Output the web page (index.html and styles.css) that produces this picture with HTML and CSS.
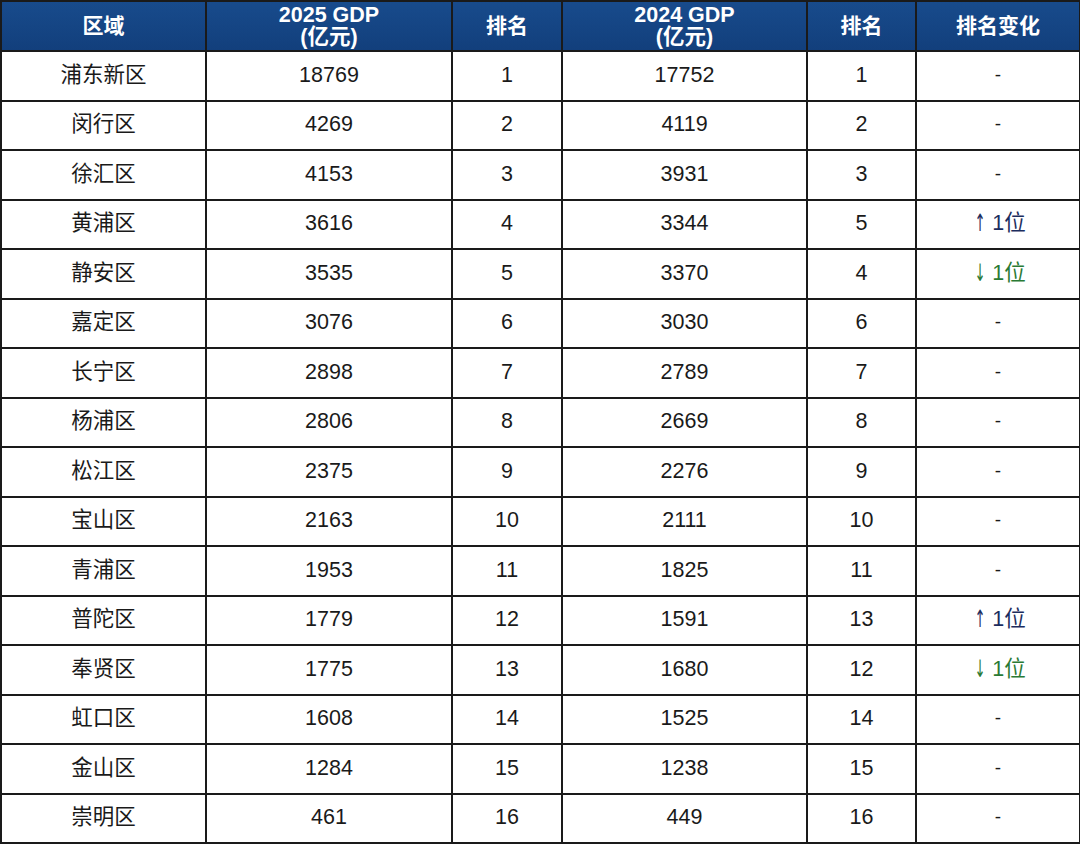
FILE: index.html
```html
<!DOCTYPE html>
<html lang="zh-CN">
<head>
<meta charset="utf-8">
<title>上海各区GDP</title>
<link rel="stylesheet" href="styles.css">
</head>
<body>
<table class="gdp">
  <colgroup>
    <col class="c1"><col class="c2"><col class="c3"><col class="c4"><col class="c5"><col class="c6">
  </colgroup>
  <thead>
    <tr><th>区域</th><th class="two">2025 GDP<br>(亿元)</th><th>排名</th><th class="two">2024 GDP<br>(亿元)</th><th>排名</th><th>排名变化</th></tr>
  </thead>
  <tbody>
    <tr><td>浦东新区</td><td>18769</td><td>1</td><td>17752</td><td>1</td><td class="dash">-</td></tr>
    <tr><td>闵行区</td><td>4269</td><td>2</td><td>4119</td><td>2</td><td class="dash">-</td></tr>
    <tr><td>徐汇区</td><td>4153</td><td>3</td><td>3931</td><td>3</td><td class="dash">-</td></tr>
    <tr><td>黄浦区</td><td>3616</td><td>4</td><td>3344</td><td>5</td><td class="up"><span class="arr">↑</span>1位</td></tr>
    <tr><td>静安区</td><td>3535</td><td>5</td><td>3370</td><td>4</td><td class="down"><span class="arr">↓</span>1位</td></tr>
    <tr><td>嘉定区</td><td>3076</td><td>6</td><td>3030</td><td>6</td><td class="dash">-</td></tr>
    <tr><td>长宁区</td><td>2898</td><td>7</td><td>2789</td><td>7</td><td class="dash">-</td></tr>
    <tr><td>杨浦区</td><td>2806</td><td>8</td><td>2669</td><td>8</td><td class="dash">-</td></tr>
    <tr><td>松江区</td><td>2375</td><td>9</td><td>2276</td><td>9</td><td class="dash">-</td></tr>
    <tr><td>宝山区</td><td>2163</td><td>10</td><td>2111</td><td>10</td><td class="dash">-</td></tr>
    <tr><td>青浦区</td><td>1953</td><td>11</td><td>1825</td><td>11</td><td class="dash">-</td></tr>
    <tr><td>普陀区</td><td>1779</td><td>12</td><td>1591</td><td>13</td><td class="up"><span class="arr">↑</span>1位</td></tr>
    <tr><td>奉贤区</td><td>1775</td><td>13</td><td>1680</td><td>12</td><td class="down"><span class="arr">↓</span>1位</td></tr>
    <tr><td>虹口区</td><td>1608</td><td>14</td><td>1525</td><td>14</td><td class="dash">-</td></tr>
    <tr><td>金山区</td><td>1284</td><td>15</td><td>1238</td><td>15</td><td class="dash">-</td></tr>
    <tr><td>崇明区</td><td>461</td><td>16</td><td>449</td><td>16</td><td class="dash">-</td></tr>
  </tbody>
</table>
</body>
</html>
```
FILE: styles.css
```css
html, body {
  margin: 0;
  padding: 0;
  background: #ffffff;
}
body {
  font-family: "Liberation Sans", "Noto Sans CJK SC", sans-serif;
  color: #1a1a1a;
}
.gdp {
  width: 1079px;
  border-collapse: collapse;
  table-layout: fixed;
  border: 2px solid #1a1a1a;
}
.c1 { width: 205px; }
.c2 { width: 246px; }
.c3 { width: 110px; }
.c4 { width: 245px; }
.c5 { width: 109px; }
.c6 { width: 164px; }
.gdp th {
  height: 48px;
  padding: 0;
  background: linear-gradient(180deg, #184b8c 0%, #123f7c 100%);
  color: #ffffff;
  font-weight: bold;
  font-size: 21px;
  line-height: 22px;
  text-align: center;
  vertical-align: middle;
  border: 2px solid #1a1a1a;
}
.gdp th.two {
  font-size: 21.5px;
  line-height: 22px;
}
.gdp td {
  height: 45.5px;
  padding: 0 0 2px;
  font-size: 21.5px;
  line-height: 24px;
  text-align: center;
  vertical-align: middle;
  border: 2px solid #1a1a1a;
}
.gdp td.dash {
  font-size: 19px;
}
.gdp td.up {
  color: #1c2d5e;
}
.gdp td.down {
  color: #2a7a35;
}
.arr {
  display: inline-block;
  margin-right: 2px;
  font-family: "DejaVu Sans", sans-serif;
  font-size: 24px;
  line-height: 20px;
  transform: scaleX(0.55);
  vertical-align: -1px;
}
```
